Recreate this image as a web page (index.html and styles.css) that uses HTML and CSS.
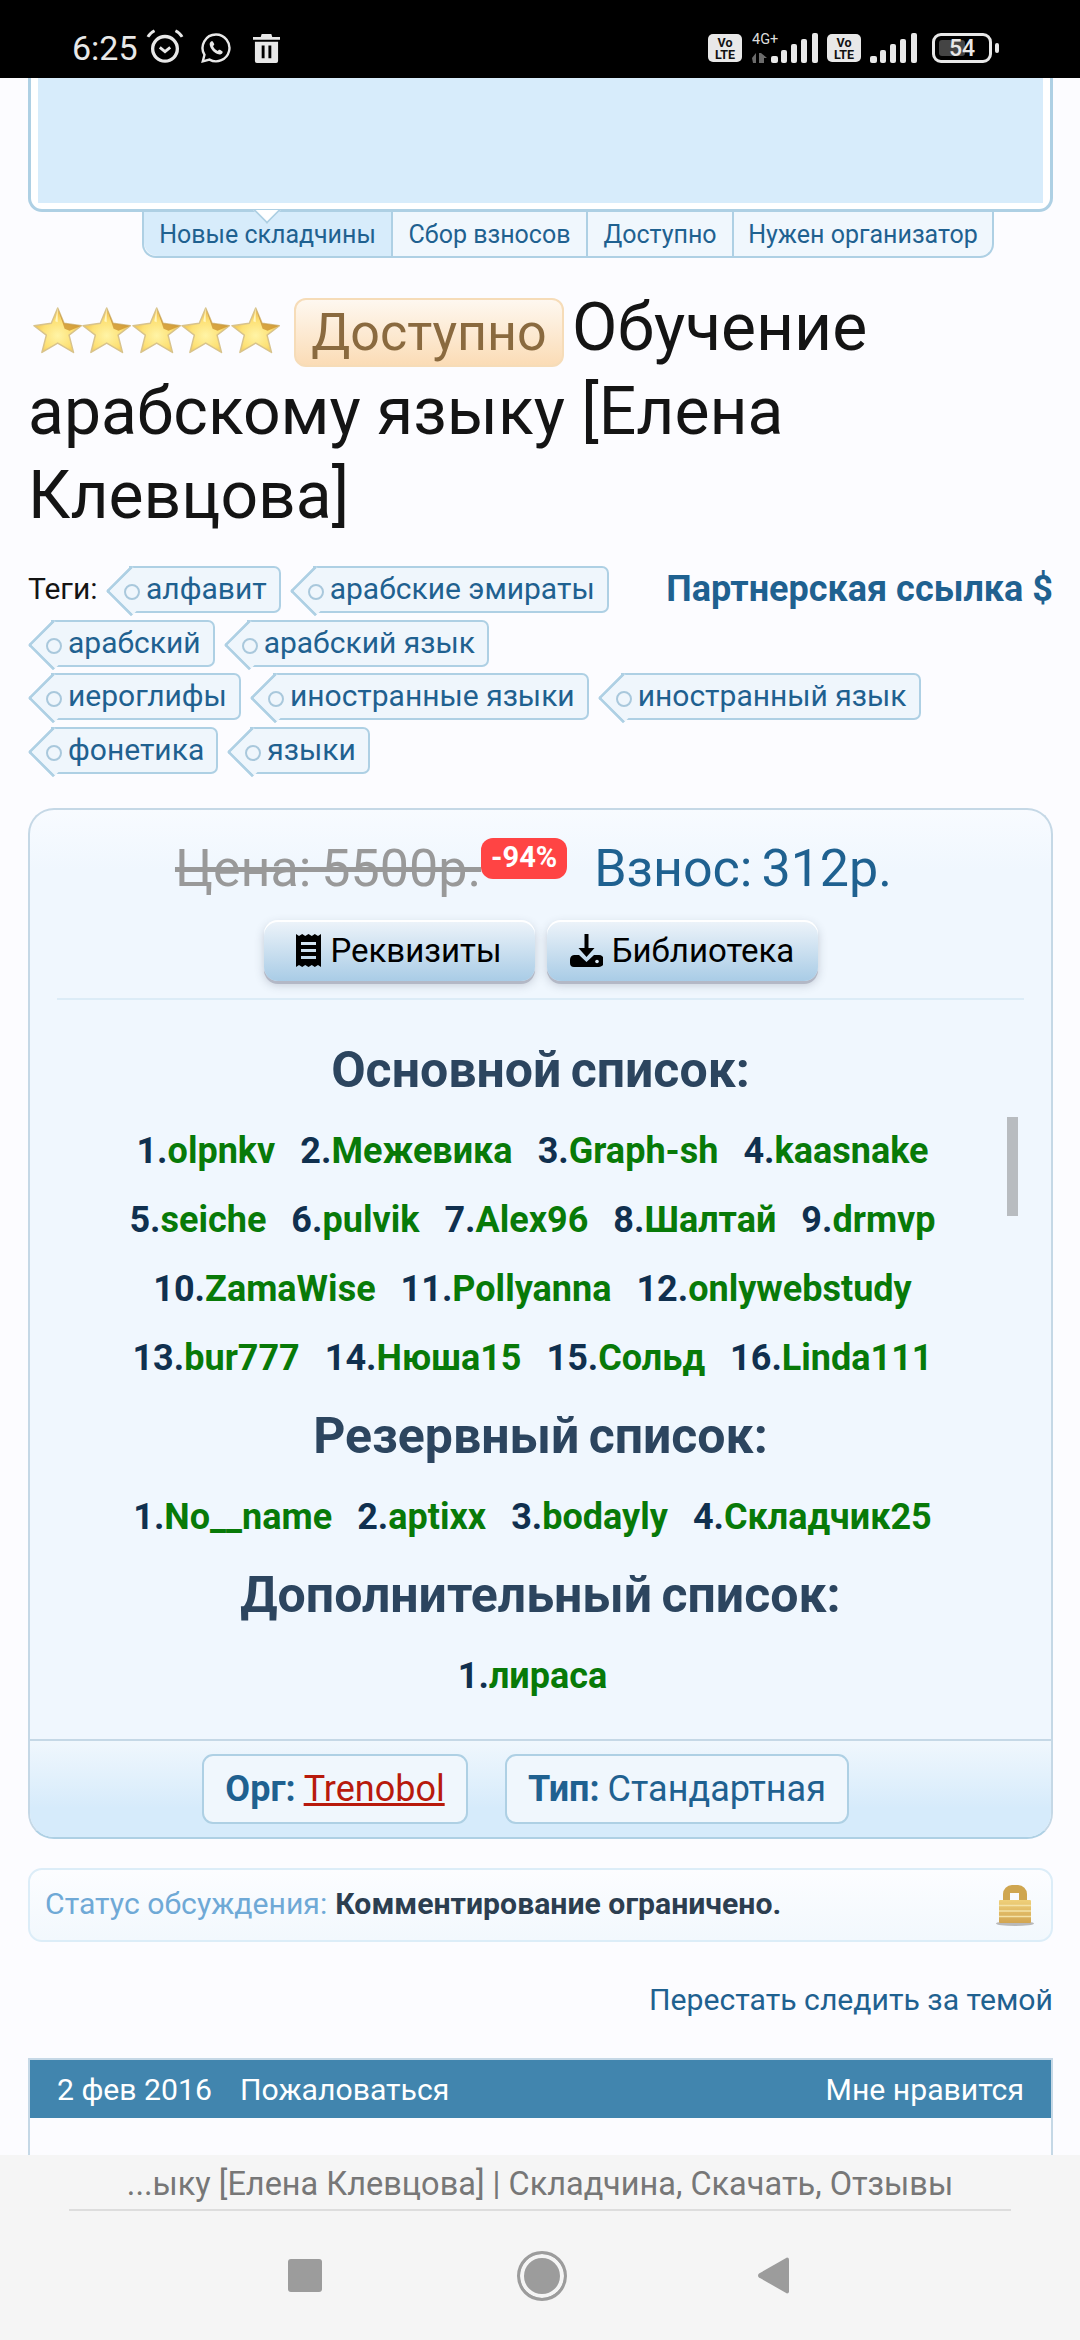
FILE: index.html
```html
<!DOCTYPE html>
<html lang="ru">
<head>
    <meta charset="UTF-8">
    <meta name="viewport" content="width=device-width, initial-scale=1.0">
    <title>Обучение арабскому языку [Елена Клевцова]</title>
    <link rel="stylesheet" href="styles.css">
</head>
<body>
    <svg class="defs" width="0" height="0">
        <defs>
            <radialGradient id="star-fill" cx=".5" cy=".62" r=".55">
                <stop offset="0" stop-color="#fff4a6"/>
                <stop offset=".6" stop-color="#fde176"/>
                <stop offset="1" stop-color="#efbe4c"/>
            </radialGradient>
            <linearGradient id="lock-fill" x1="0" y1="0" x2="0" y2="1">
                <stop offset="0" stop-color="#efd07a"/>
                <stop offset="1" stop-color="#d2a551"/>
            </linearGradient>
            <symbol id="star" viewBox="0 0 50 50">
                <path d="M25 2l6.500 15.500L49 20l-12.500 9.500L41 47 25 37.500 9 47l4.500-17.500L1 20l17.500-2.500z" fill="url(#star-fill)" stroke="#d8c38c" stroke-width="1.500" stroke-linejoin="round"/>
                <path d="M25 2l6.500 15.500L49 20 37 25l-5-2z" fill="#c98f2e" opacity=".75"/>
                <path d="M25 2l-2.500 13.500 2.500 1z" fill="#fff6c0"/>
            </symbol>
            <symbol id="volte" viewBox="0 0 34 28">
                <rect width="34" height="28" rx="5" fill="#e8e8e8"/>
                <text x="17" y="13" class="volte-text">Vo</text>
                <text x="17" y="25" class="volte-text">LTE</text>
            </symbol>
            <symbol id="bars" viewBox="0 0 47 30">
                <rect x="0" y="23" width="7" height="7" rx="2" fill="#e8e8e8"/>
                <rect x="10" y="17" width="6" height="13" rx="2" fill="#e8e8e8"/>
                <rect x="20" y="11" width="6" height="19" rx="2" fill="#e8e8e8"/>
                <rect x="30" y="6" width="6" height="24" rx="2" fill="#e8e8e8"/>
                <rect x="41" y="0" width="6" height="30" rx="2" fill="#e8e8e8"/>
            </symbol>
        </defs>
    </svg>

    <div class="phone">
        <!-- status bar -->
        <header class="statusbar">
            <span class="clock">6:25</span>
            <svg class="ic-alarm" viewBox="0 0 40 40" fill="none" stroke="#e8e8e8">
                <circle cx="20" cy="23" r="13" stroke-width="3.5"/>
                <path d="M14.5 21.5l5.5 4.5 5.5-4.5" stroke-width="3"/>
                <path d="M2 10.5c1.5-3 3.800-5 7-6.500M38 10.500c-1.500-3-3.800-5-7-6.500" stroke-width="3"/>
            </svg>
            <svg class="ic-whatsapp" viewBox="0 0 32 32" fill="none">
                <path d="M16 2.500a13.400 13.400 0 0 0-11.500 20.300L2.800 29.300l6.700-1.700A13.400 13.400 0 1 0 16 2.500z" stroke="#e8e8e8" stroke-width="2.400"/>
                <path d="M11 9.500c-1 .8-1.600 2-1.200 3.800.9 4 4.600 8 8.600 9 1.800.4 3.200-.2 4-1.400.4-.6.3-1.300-.2-1.700l-2.200-1.400c-.5-.3-1-.2-1.400.2l-.8.9c-2.200-.8-4-2.700-4.800-4.900l.9-.8c.4-.4.5-.9.2-1.400l-1.300-2.200c-.4-.5-1.200-.6-1.800-.1z" fill="#e8e8e8"/>
            </svg>
            <svg class="ic-trash" viewBox="0 0 28 30">
                <path d="M9 0h10l1 3h8v3H0V3h8zM2 8h24v20a2 2 0 0 1-2 2H4a2 2 0 0 1-2-2zM9 12v13h3V12zM16 12v13h3V12z" fill="#e8e8e8" fill-rule="evenodd"/>
            </svg>

            <div class="status-right">
                <svg class="ic-volte"><use href="#volte"/></svg>
                <div class="net">
                    <span class="net-type">4G+</span>
                    <svg class="ic-arrows" viewBox="0 0 16 10">
                        <path d="M0 5l4-5v10H1zM7 10V0h2l6 5h-3v5z" fill="#6b6b6b"/>
                    </svg>
                </div>
                <svg class="ic-bars first"><use href="#bars"/></svg>
                <svg class="ic-volte"><use href="#volte"/></svg>
                <svg class="ic-bars"><use href="#bars"/></svg>
                <div class="battery">
                    <span class="battery-fill"></span>
                    <span class="battery-num">54</span>
                </div>
                <span class="battery-cap"></span>
            </div>
        </header>

        <main class="page">
            <div class="top-block">
                <div class="top-block-inner"></div>
            </div>
            <nav class="tabs">
                <a class="tab active">Новые складчины</a>
                <a class="tab">Сбор взносов</a>
                <a class="tab">Доступно</a>
                <a class="tab">Нужен организатор</a>
            </nav>

            <h1 class="title"><span class="stars"><svg><use href="#star"/></svg><svg><use href="#star"/></svg><svg><use href="#star"/></svg><svg><use href="#star"/></svg><svg><use href="#star"/></svg></span><span class="badge-status">Доступно</span>Обучение арабскому языку [Елена Клевцова]</h1>

            <section class="tags">
                <div class="tag-row">
                    <span class="tags-label">Теги:</span>
                    <a class="tag">алфавит</a>
                    <a class="tag">арабские эмираты</a>
                    <a class="partner">Партнерская ссылка $</a>
                </div>
                <div class="tag-row">
                    <a class="tag">арабский</a>
                    <a class="tag">арабский язык</a>
                </div>
                <div class="tag-row">
                    <a class="tag">иероглифы</a>
                    <a class="tag">иностранные языки</a>
                    <a class="tag">иностранный язык</a>
                </div>
                <div class="tag-row">
                    <a class="tag">фонетика</a>
                    <a class="tag">языки</a>
                </div>
            </section>

            <section class="card">
                <div class="price-row">
                    <span class="old-price">Цена: 5500р.</span>
                    <span class="discount">-94%</span>
                    <span class="fee">Взнос:</span>
                    <span class="fee fee-sum">312р.</span>
                </div>
                <div class="actions">
                    <a class="btn">
                        <svg class="ic-receipt" viewBox="0 0 25 33">
                            <path d="M0 0l3 2 3.200-2 3 2 3.300-2 3.300 2 3-2 3.200 2 3-2v33l-3-2-3.200 2-3-2-3.300 2-3.300-2-3 2-3.200-2-3 2zM5 8v3h15V8zM5 15v3h15v-3zM5 22v3h15v-3z" fill="#000" fill-rule="evenodd"/>
                        </svg>
                        Реквизиты
                    </a>
                    <a class="btn">
                        <svg class="ic-download" viewBox="0 0 33 33">
                            <path d="M14.500 0h4v14h6l-8 9-8-9h6z" fill="#000"/>
                            <path d="M4 21h5l7.500 7 7.500-7h5a5 5 0 0 1 5 5v2a5 5 0 0 1-5 5H4a4 4 0 0 1-4-4v-3a5 5 0 0 1 4-5z" fill="#000"/>
                            <circle cx="27" cy="27.500" r="1.800" fill="#dce9f4"/>
                        </svg>
                        Библиотека
                    </a>
                </div>
                <div class="card-divider"></div>

                <div class="lists">
                    <h2 class="list-title first">Основной список:</h2>
                    <div class="main-list">
                        <div class="list-row">
                            <span class="member">1.<a>olpnkv</a></span>
                            <span class="member">2.<a>Межевика</a></span>
                            <span class="member">3.<a>Graph-sh</a></span>
                            <span class="member">4.<a>kaasnake</a></span>
                        </div>
                        <div class="list-row">
                            <span class="member">5.<a>seiche</a></span>
                            <span class="member">6.<a>pulvik</a></span>
                            <span class="member">7.<a>Alex96</a></span>
                            <span class="member">8.<a>Шалтай</a></span>
                            <span class="member">9.<a>drmvp</a></span>
                        </div>
                        <div class="list-row">
                            <span class="member">10.<a>ZamaWise</a></span>
                            <span class="member">11.<a>Pollyanna</a></span>
                            <span class="member">12.<a>onlywebstudy</a></span>
                        </div>
                        <div class="list-row">
                            <span class="member">13.<a>bur777</a></span>
                            <span class="member">14.<a>Нюша15</a></span>
                            <span class="member">15.<a>Сольд</a></span>
                            <span class="member">16.<a>Linda111</a></span>
                        </div>
                        <span class="scroll-thumb"></span>
                    </div>

                    <h2 class="list-title">Резервный список:</h2>
                    <div class="list-row">
                        <span class="member">1.<a>No__name</a></span>
                        <span class="member">2.<a>aptixx</a></span>
                        <span class="member">3.<a>bodayly</a></span>
                        <span class="member">4.<a>Складчик25</a></span>
                    </div>

                    <h2 class="list-title">Дополнительный список:</h2>
                    <div class="list-row">
                        <span class="member">1.<a>лираса</a></span>
                    </div>
                </div>

                <div class="card-footer">
                    <div class="info-box org-box"><b>Орг:</b> <a class="org-link">Trenobol</a></div>
                    <div class="info-box type-box"><b>Тип:</b> Стандартная</div>
                </div>
            </section>

            <div class="thread-status">
                <span class="thread-label">Статус обсуждения:</span>
                <b>Комментирование ограничено.</b>
                <svg class="ic-lock" viewBox="0 0 38 42">
                    <ellipse cx="19" cy="39.500" rx="19" ry="2.500" fill="#b9b9b9"/>
                    <path fill-rule="evenodd" d="M7 18V10a9 9 0 0 1 9-9h6a9 9 0 0 1 9 9v8zM14 9v8h9V9z" fill="#cfa650"/>
                    <rect x="3" y="16" width="32" height="23" rx="1" fill="url(#lock-fill)"/>
                    <path d="M3 21.500h32M3 27h32M3 32.500h32" stroke="#f4e2a6" stroke-width="1.500"/>
                </svg>
            </div>

            <a class="unwatch">Перестать следить за темой</a>

            <article class="post">
                <div class="post-bar">
                    <span>2 фев 2016</span>
                    <span class="post-report">Пожаловаться</span>
                    <span class="post-like">Мне нравится</span>
                </div>
            </article>
        </main>

        <!-- browser bar + android nav -->
        <footer class="bottom">
            <div class="page-title">...ыку [Елена Клевцова] | Складчина, Скачать, Отзывы</div>
            <div class="navbar">
                <span class="nav-square"></span>
                <span class="nav-circle"></span>
                <svg class="nav-back" viewBox="0 0 31 37">
                    <path d="M29 0.500a2 2 0 0 1 2 2v32a2 2 0 0 1-2 2L1 20.500a2.500 2.500 0 0 1 0-4z" fill="#9c9c9c"/>
                </svg>
            </div>
        </footer>
    </div>
</body>
</html>
```

FILE: styles.css
```css
* {
    box-sizing: border-box;
}

body {
    margin: 0;
    font-family: Roboto, "Noto Sans", sans-serif;
    background-color: #fcfcff;
}

.defs {
    position: absolute;
}

.phone {
    width: 1080px;
    height: 2340px;
    display: flex;
    flex-direction: column;
    overflow: hidden;
}

/* status bar */
.statusbar {
    height: 78px;
    flex: none;
    background: #000;
    color: #e8e8e8;
    display: flex;
    align-items: center;
    padding: 18px 81px 0 72px;
}

.clock {
    font-size: 34px;
    width: 73px;
}

.ic-alarm {
    width: 40px;
    height: 38px;
    margin-top: -4px;
}

.ic-whatsapp {
    width: 32px;
    height: 32px;
    margin-left: 15px;
}

.ic-trash {
    width: 27px;
    height: 29px;
    margin-left: 21px;
}

.status-right {
    margin-left: auto;
    display: flex;
    align-items: center;
}

.ic-volte {
    width: 34px;
    height: 28px;
}

.volte-text {
    font-family: Roboto, sans-serif;
    font-size: 12.5px;
    font-weight: 700;
    text-anchor: middle;
    fill: #111;
}

.net {
    width: 29px;
    height: 30px;
    margin-left: 10px;
    display: flex;
    flex-direction: column;
    justify-content: space-between;
}

.net-type {
    font-size: 14.5px;
    line-height: 13px;
    color: #ddd;
}

.ic-arrows {
    width: 16px;
    height: 10px;
}

.ic-bars {
    width: 47px;
    height: 30px;
    margin-left: 9px;
    margin-right: 9px;
}

.ic-bars.first {
    margin-left: -10px;
}

.battery {
    width: 60px;
    height: 30px;
    margin-left: 6px;
    border: 3px solid #e8e8e8;
    border-radius: 9px;
    position: relative;
    display: flex;
    align-items: center;
    justify-content: center;
}

.battery-fill {
    position: absolute;
    left: 4px;
    top: 4px;
    bottom: 4px;
    width: 26px;
    background: #444;
    border-radius: 3px;
}

.battery-num {
    position: relative;
    font-size: 23px;
    font-weight: 500;
    color: #e8e8e8;
}

.battery-cap {
    width: 4px;
    height: 10px;
    margin-left: 3px;
    background: #e8e8e8;
    border-radius: 2px;
}

/* page */
.page {
    flex: 1;
    min-height: 0;
    overflow: hidden;
    padding: 0 27px 0 28px;
}

.top-block {
    height: 134px;
    background: #fff;
    border: 3px solid #aed0e4;
    border-top: 0;
    border-radius: 0 0 14px 14px;
    padding: 0 7px 7px;
}

.top-block-inner {
    height: 125px;
    background: #d7ecfb;
}

.tabs {
    display: flex;
    width: 852px;
    height: 46px;
    margin-left: 114px;
    background: #f0f7fd;
    border: 2px solid #aed0e4;
    border-top: 0;
    border-radius: 0 0 14px 14px;
}

.tab {
    display: flex;
    align-items: center;
    justify-content: center;
    font-size: 25px;
    color: #1f6190;
    border-left: 2px solid #aed0e4;
}

.tab:first-child {
    border-left: 0;
    border-radius: 0 0 0 14px;
    width: 247px;
}

.tab:nth-child(2) {
    width: 195px;
}

.tab:nth-child(3) {
    width: 146px;
}

.tab:last-child {
    flex: 1;
}

.tab.active {
    background: #d7ecfb;
    position: relative;
}

.tab.active::before {
    content: "";
    position: absolute;
    left: 113px;
    top: -12px;
    width: 18px;
    height: 18px;
    background: #fff;
    border-right: 2px solid #aed0e4;
    border-bottom: 2px solid #aed0e4;
    clip-path: polygon(100% 0, 100% 100%, 0 100%);
    transform: rotate(45deg);
}

.title {
    margin: 28px 0 0;
    font-size: 66px;
    font-weight: 400;
    line-height: 84px;
    color: #141414;
}

.stars {
    display: inline-flex;
    width: 247px;
    margin-left: 5px;
    vertical-align: -5px;
}

.stars svg {
    width: 49.4px;
    height: 49.4px;
    filter: blur(.4px);
}

.badge-status {
    display: inline-block;
    font-size: 52px;
    line-height: 65px;
    height: 69px;
    width: 270px;
    text-align: center;
    margin: 0 8px 0 14px;
    color: #8a6a3f;
    background: linear-gradient(#fef8f0, #fbdcb6);
    border: 2px solid #f6dcb8;
    border-radius: 12px;
}

.tags {
    margin-top: 28px;
}

.tag-row {
    display: flex;
    align-items: center;
    gap: 9px;
    height: 47px;
    margin-bottom: 6.7px;
    font-size: 30px;
}

.tags-label {
    color: #141414;
    width: 69px;
    padding-bottom: 2px;
}

.tag {
    position: relative;
    z-index: 0;
    height: 47px;
    margin-left: 23px;
    padding: 0 12px 2px 17px;
    display: flex;
    align-items: center;
    color: #1f6190;
    background: #eff6fc;
    border: 2px solid #aed0e4;
    border-left: 0;
    border-radius: 0 7px 7px 0;
}

.tag::before {
    content: "";
    position: absolute;
    z-index: -1;
    left: -16px;
    top: 5px;
    width: 33px;
    height: 33px;
    background: #eff6fc;
    border-left: 3px solid #aed0e4;
    border-bottom: 3px solid #aed0e4;
    border-radius: 0 0 0 3px;
    transform: rotate(45deg);
}

.tag::after {
    content: "";
    position: absolute;
    left: -5px;
    top: 16px;
    width: 12px;
    height: 12px;
    border: 2px solid #a9c8dc;
    border-radius: 50%;
}

.partner {
    margin-left: auto;
    padding-bottom: 2px;
    font-size: 36px;
    font-weight: 700;
    color: #1f6190;
}

/* price card */
.card {
    margin-top: 34px;
    height: 1031px;
    border: 2px solid #c5d8e6;
    border-bottom-color: #aed0e4;
    border-radius: 26px;
    background: linear-gradient(#f8fbff, #f0f7fe 60px);
    display: flex;
    flex-direction: column;
}

.price-row {
    height: 110px;
    padding-top: 6px;
    display: flex;
    justify-content: center;
    align-items: center;
    font-size: 52px;
    word-spacing: -3px;
}

.old-price {
    color: #999;
    text-decoration: line-through;
}

.discount {
    align-self: flex-start;
    margin-top: 22px;
    height: 41px;
    width: 86px;
    line-height: 39px;
    text-align: center;
    font-size: 29px;
    font-weight: 700;
    color: #fff;
    background: #f44;
    border-radius: 12px;
    margin-right: 27px;
}

.fee {
    color: #1f6190;
}

.fee-sum {
    margin-left: 9px;
    margin-right: 14px;
}

.actions {
    display: flex;
    justify-content: center;
    gap: 12px;
}

.btn {
    width: 271px;
    height: 61px;
    display: flex;
    align-items: center;
    justify-content: center;
    gap: 9px;
    font-size: 33px;
    color: #000;
    background: linear-gradient(#eef4fa, #a9cce6);
    border-radius: 14px;
    box-shadow: inset 0 2px 0 #fff, 0 3px 0 #b3b8c6, 0 4px 10px rgba(60, 70, 90, .25);
}

.ic-receipt {
    width: 25px;
    height: 33px;
}

.ic-download {
    width: 33px;
    height: 33px;
}

.card-divider {
    height: 2px;
    margin: 17px 27px 0;
    background: #dcecf7;
}

.lists {
    flex: 1;
    padding-top: 26px;
}

.list-title {
    margin: 14px 0 16px;
    font-size: 50px;
    line-height: 60px;
    font-weight: 700;
    text-align: center;
    color: #2c455f;
    word-spacing: -3px;
}

.main-list {
    position: relative;
}

.list-row {
    height: 69px;
    display: flex;
    justify-content: center;
    gap: 25px;
    padding-right: 16px;
    font-size: 36px;
    line-height: 71px;
    font-weight: 700;
    color: #10304f;
}

.member a {
    color: #087a08;
}

.scroll-thumb {
    position: absolute;
    right: 33px;
    top: 1px;
    width: 11px;
    height: 99px;
    background: #b8bcc0;
}

.card-footer {
    height: 98px;
    padding-top: 13px;
    border-top: 2px solid #c5d8e6;
    border-radius: 0 0 24px 24px;
    background: linear-gradient(#f0f7fd, #d6ebfb 70%);
    display: flex;
    justify-content: center;
    gap: 37px;
    padding-right: 30px;
}

.info-box {
    height: 70px;
    display: flex;
    align-items: center;
    justify-content: center;
    gap: 8px;
    font-size: 36px;
    color: #1f6190;
    background: #f0f7fd;
    border: 2px solid #aed0e4;
    border-radius: 11px;
}

.org-box {
    width: 266px;
}

.type-box {
    width: 344px;
}

.org-link {
    color: #b81a0c;
    text-decoration: underline;
}

.thread-status {
    margin-top: 29px;
    height: 74px;
    display: flex;
    align-items: center;
    gap: 8px;
    padding: 0 17px 4px 15px;
    font-size: 30.2px;
    color: #2c3e50;
    background: linear-gradient(#fcfdff, #f2f8fd);
    border: 2px solid #dcedf8;
    border-radius: 14px;
}

.thread-label {
    color: #6fa9d6;
}

.ic-lock {
    width: 38px;
    height: 42px;
    margin-left: auto;
    margin-top: 4px;
    filter: blur(.5px);
}

.unwatch {
    display: block;
    margin-top: 39px;
    text-align: right;
    font-size: 30.2px;
    line-height: 38px;
    color: #1f6190;
}

.post {
    margin-top: 39px;
    height: 140px;
    border: 2px solid #c5d8e6;
    border-bottom: 0;
}

.post-bar {
    height: 58px;
    display: flex;
    align-items: center;
    padding: 0 27px;
    font-size: 30.2px;
    color: #fff;
    background: #4185ae;
}

.post-report {
    margin-left: 28px;
}

.post-like {
    margin-left: auto;
}

/* bottom */
.bottom {
    height: 185px;
    flex: none;
    background: #f5f5f5;
}

.page-title {
    margin: 0 69px;
    height: 56px;
    line-height: 58px;
    text-align: center;
    font-size: 32.5px;
    color: #777;
    white-space: nowrap;
    border-bottom: 2px solid #ddd;
}

.navbar {
    height: 129px;
    padding-right: 4px;
    display: flex;
    justify-content: center;
    align-items: center;
}

.nav-square {
    width: 34px;
    height: 33px;
    background: #9c9c9c;
    border-radius: 3px;
}

.nav-circle {
    width: 50px;
    height: 50px;
    margin: 0 191px 0 195px;
    border-radius: 50%;
    background: #9c9c9c;
    border: 3px solid #9c9c9c;
    box-shadow: inset 0 0 0 4px #f5f5f5;
}

.nav-back {
    width: 31px;
    height: 37px;
}
```
